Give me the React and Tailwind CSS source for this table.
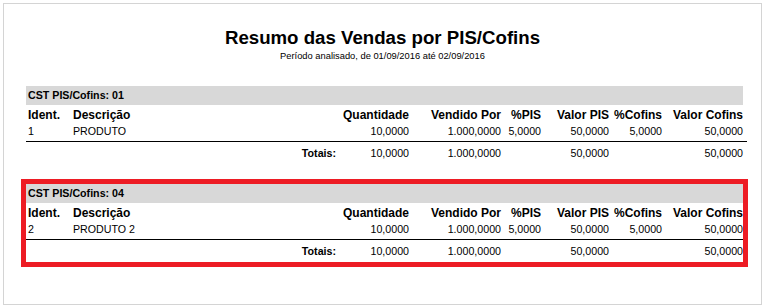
const cols = "grid grid-cols-[47px_267px_69px_92px_40px_68px_53px_81px]";

const sections = [
  {
    cst: "01",
    ident: "1",
    desc: "PRODUTO",
    boxed: false,
  },
  {
    cst: "04",
    ident: "2",
    desc: "PRODUTO 2",
    boxed: true,
  },
];

function Section({ s }) {
  return (
    <div
      className={
        s.boxed
          ? "border-[5px] border-[#ed1c24] mt-[15px]"
          : "px-[5px]"
      }
    >
      <div className="h-[19px] bg-[#d8d8d8] flex items-center pl-[2px] text-[10.67px] font-bold leading-none">
        CST PIS/Cofins: {s.cst}
      </div>

      {/* header */}
      <div className={`${cols} h-[20px] items-center text-[12px] font-bold leading-none`}>
        <div className="pl-[2px]">Ident.</div>
        <div>Descrição</div>
        <div className="text-right">Quantidade</div>
        <div className="text-right">Vendido Por</div>
        <div className="text-right">%PIS</div>
        <div className="text-right">Valor PIS</div>
        <div className="text-right">%Cofins</div>
        <div className="text-right">Valor Cofins</div>
      </div>

      {/* linha */}
      <div className={`${cols} h-[13px] items-center text-[10.67px] leading-none`}>
        <div className="pl-[2px]">{s.ident}</div>
        <div>{s.desc}</div>
        <div className="text-right">10,0000</div>
        <div className="text-right">1.000,0000</div>
        <div className="text-right">5,0000</div>
        <div className="text-right">50,0000</div>
        <div className="text-right">5,0000</div>
        <div className="text-right">50,0000</div>
      </div>

      <div className={`mt-[3px] h-px bg-black ${s.boxed ? "" : "-mr-[4px]"}`}></div>

      {/* totais */}
      <div className={`${cols} h-[22px] items-center text-[10.67px] leading-none`}>
        <div></div>
        <div className="text-right pr-[4px] font-bold">Totais:</div>
        <div className="text-right">10,0000</div>
        <div className="text-right">1.000,0000</div>
        <div></div>
        <div className="text-right">50,0000</div>
        <div></div>
        <div className="text-right">50,0000</div>
      </div>
    </div>
  );
}

export default function App() {
  return (
    <div className="w-[765px] h-[308px] bg-white overflow-hidden" style={{ fontFamily: '"Liberation Sans", Arial, sans-serif' }}>
      <div className="ml-[3px] mt-[3px] w-[759px] h-[302px] border border-[#d4d4d4] text-black">
        <h1 className="mt-[23px] text-center text-[18.67px] leading-[22px] font-bold">
          Resumo das Vendas por PIS/Cofins
        </h1>
        <p className="mt-[2px] text-center text-[9.33px] leading-[11px]">
          Período analisado, de 01/09/2016 até 02/09/2016
        </p>

        <div className="ml-[17px] w-[727px] mt-[24px]">
          {sections.map((s) => (
            <Section key={s.cst} s={s} />
          ))}
        </div>
      </div>
    </div>
  );
}
